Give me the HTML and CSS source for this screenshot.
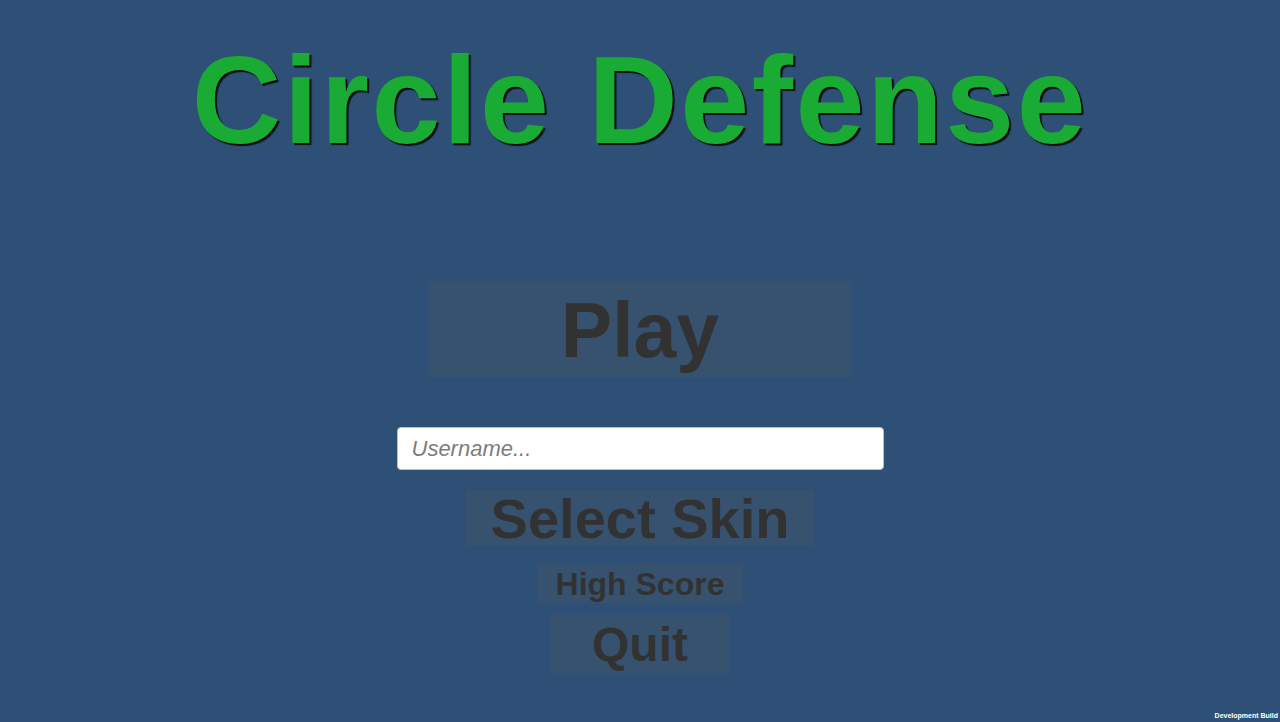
FILE: index.html
```html
<!DOCTYPE html>
<html lang="en">
<head>
<meta charset="utf-8">
<title>Circle Defense</title>
<link rel="stylesheet" href="styles.css">
</head>
<body>
<main class="menu">
  <h1 class="title">Circle Defense</h1>
  <button class="btn btn-play">Play</button>
  <input class="username" type="text" placeholder="Username...">
  <button class="btn btn-skin">Select Skin</button>
  <button class="btn btn-score">High Score</button>
  <button class="btn btn-quit">Quit</button>
</main>
<div class="dev-build">Development Build</div>
</body>
</html>
```
FILE: styles.css
```css
html, body {
  margin: 0;
  padding: 0;
  width: 1280px;
  height: 722px;
  overflow: hidden;
  background: #2e5077;
  font-family: "Liberation Sans", Arial, sans-serif;
}

.menu {
  display: flex;
  flex-direction: column;
  align-items: center;
  padding-top: 38px;
}

.title {
  margin: 0;
  font-size: 124px;
  line-height: 124px;
  font-weight: bold;
  letter-spacing: 2.5px;
  color: #1aab35;
  text-shadow: 2px 2px 1px rgba(0, 0, 0, 0.85);
  white-space: nowrap;
}

.btn {
  border: none;
  padding: 0;
  margin: 0;
  background: #37526f;
  color: #323232;
  font-family: "Liberation Sans", Arial, sans-serif;
  font-weight: bold;
  display: block;
  text-align: center;
}

.btn-play {
  margin-top: 119px;
  width: 424px;
  height: 97px;
  font-size: 77px;
  line-height: 99px;
}

.username {
  margin-top: 49px;
  box-sizing: border-box;
  width: 487px;
  height: 43px;
  border: 1px solid #b9c0c8;
  border-radius: 4px;
  background: #ffffff;
  padding: 0 0 0 14px;
  font-family: "Liberation Sans", Arial, sans-serif;
  font-size: 22px;
  font-style: italic;
  color: #323232;
  outline: none;
}

.username::placeholder {
  color: #7d7d7d;
  font-style: italic;
}

.btn-skin {
  margin-top: 20px;
  width: 348px;
  height: 56px;
  font-size: 56px;
  line-height: 58px;
}

.btn-score {
  margin-top: 18px;
  width: 206px;
  height: 39px;
  font-size: 32px;
  line-height: 40px;
}

.btn-quit {
  margin-top: 12px;
  width: 180px;
  height: 58px;
  font-size: 48px;
  line-height: 60px;
}

.dev-build {
  position: absolute;
  right: 2px;
  bottom: 2px;
  font-size: 7px;
  font-weight: bold;
  color: #ffffff;
  line-height: 9px;
}
```
